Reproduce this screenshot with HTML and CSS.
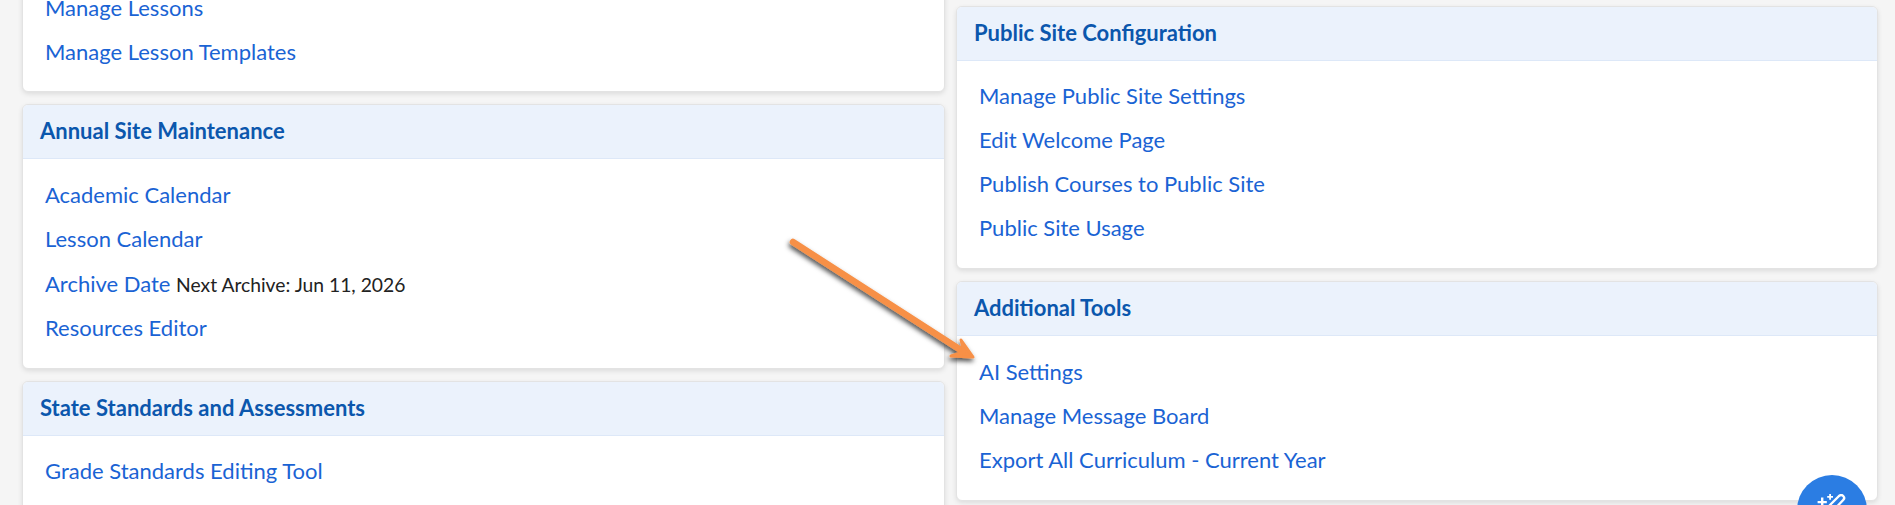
FILE: index.html
```html
<!DOCTYPE html>
<html lang="en">
<head>
  <meta charset="UTF-8">
  <title>School Settings</title>
  <link rel="stylesheet" href="styles.css">
</head>
<body>
  <div class="columns">
    <!-- Left column, scrolled so the first card is cut off -->
    <div class="column column-left">
      <section class="card">
        <ul class="links links-cut">
          <li><a href="#">Manage Lessons</a></li>
          <li><a href="#">Manage Lesson Templates</a></li>
        </ul>
      </section>

      <section class="card">
        <h3 class="card-title">Annual Site Maintenance</h3>
        <ul class="links">
          <li><a href="#">Academic Calendar</a></li>
          <li><a href="#">Lesson Calendar</a></li>
          <li class="row-note"><a href="#">Archive Date</a> <span class="note">Next Archive: Jun 11, 2026</span></li>
          <li><a href="#">Resources Editor</a></li>
        </ul>
      </section>

      <section class="card">
        <h3 class="card-title">State Standards and Assessments</h3>
        <ul class="links links-tight">
          <li><a href="#">Grade Standards Editing Tool</a></li>
        </ul>
      </section>
    </div>

    <div class="column column-right">
      <section class="card">
        <h3 class="card-title">Public Site Configuration</h3>
        <ul class="links links-tight">
          <li><a href="#">Manage Public Site Settings</a></li>
          <li><a href="#">Edit Welcome Page</a></li>
          <li><a href="#">Publish Courses to Public Site</a></li>
          <li><a href="#">Public Site Usage</a></li>
        </ul>
      </section>

      <section class="card">
        <h3 class="card-title">Additional Tools</h3>
        <ul class="links">
          <li><a href="#">AI Settings</a></li>
          <li><a href="#">Manage Message Board</a></li>
          <li><a href="#">Export All Curriculum - Current Year</a></li>
        </ul>
      </section>
    </div>
  </div>

  <!-- Annotation arrow drawn over the page -->
  <svg class="arrow" width="200" height="140" viewBox="0 0 200 140">
    <defs>
      <filter id="arrow-shadow" x="-20%" y="-20%" width="140%" height="140%">
        <feDropShadow dx="-1" dy="3" stdDeviation="2.5" flood-color="#000" flood-opacity="0.7"/>
      </filter>
    </defs>
    <g filter="url(#arrow-shadow)" fill="#f79046" stroke="#f79046" stroke-linecap="round" stroke-linejoin="round">
      <path d="M12 12 L186 124" stroke-width="6.5"/>
      <path d="M180 110 L192 127 L170 126 L183 122 Z" stroke-width="3"/>
    </g>
  </svg>

  <button class="fab" aria-label="AI assistant">
    <svg class="fab-icon" width="32" height="32" viewBox="0 0 32 32" fill="#fff">
      <path d="M23 2 C24.4 .8 26 .8 27.2 2 C28.4 3.2 28.4 4.8 27.2 6 L13 21 L8.5 16.5 Z" fill="none" stroke="#fff" stroke-width="2.4" stroke-linejoin="round"/>
      <path d="M5 3.5 h2.4 v3.4 h3.4 v2.4 h-3.4 v3.4 h-2.4 v-3.4 h-3.4 v-2.4 h3.4 Z"/>
      <path d="M13.2 0 h1.8 v2 h2 v1.8 h-2 v2 h-1.8 v-2 h-2 v-1.8 h2 Z"/>
    </svg>
  </button>
</body>
</html>
```

FILE: styles.css
```css
html, body {
  height: 100%;
}

body {
  margin: 0;
  overflow: hidden;
  background: #f5f5f5;
  font-family: Lato, "Open Sans", sans-serif;
  font-size: 22px;
}

.columns {
  display: grid;
  grid-template-columns: 923px 922px;
  gap: 11px;
  padding-left: 22px;
}

.column {
  display: flex;
  flex-direction: column;
  gap: 12px;
}

.column-left {
  margin-top: -30px;
}

.column-right {
  margin-top: 6px;
}

.card {
  background: #fff;
  border: 1px solid #e3e3e3;
  border-radius: 6px;
  box-shadow: 0 2px 5px rgba(0, 0, 0, 0.1);
  overflow: hidden;
}

.card-title {
  margin: 0;
  height: 53px;
  padding: 0 17px;
  line-height: 51px;
  font-size: 22px;
  font-weight: 700;
  color: #0b57ad;
  background: #ebf2fc;
  border-bottom: 1px solid #dde8f8;
}

.links {
  list-style: none;
  margin: 0;
  padding: 14px 22px 18px;
}

.links-cut {
  padding: 15px 22px 17px;
}

.links-tight {
  padding-top: 13px;
}

.links li {
  height: 44px;
  line-height: 44px;
  white-space: nowrap;
}

.links .row-note {
  height: 45px;
  line-height: 45px;
}

.links a {
  color: #1a63d4;
  text-decoration: none;
}

.note {
  font-size: 19.3px;
  color: #222;
}

.arrow {
  position: absolute;
  left: 781px;
  top: 230px;
}

.fab {
  position: fixed;
  left: 1797px;
  top: 475px;
  width: 70px;
  height: 70px;
  padding: 0;
  border: none;
  border-radius: 50%;
  background: #2b7de3;
}

.fab-icon {
  position: absolute;
  left: 19px;
  top: 19px;
}
```
